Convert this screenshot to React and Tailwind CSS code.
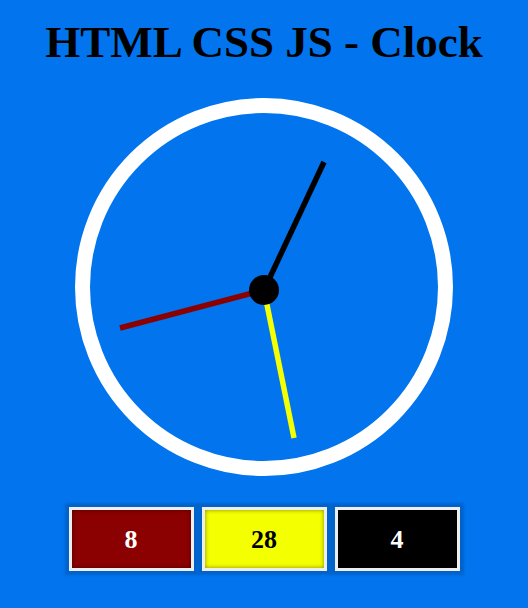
import React from "react";

const hands = [
  { x: 120, y: 328, color: "#8b0000" },
  { x: 294, y: 438, color: "#f4ff00" },
  { x: 324, y: 162, color: "#000000" },
];

function Clock() {
  // svg covers 378x378, origin at face top-left (75, 98)
  const cx = 189;
  const cy = 192;
  return (
    <div className="relative w-[378px] h-[378px] rounded-full border-[15px] border-white">
      <svg
        className="absolute -left-[15px] -top-[15px]"
        width="378"
        height="378"
        viewBox="0 0 378 378"
      >
        {hands.map((h, i) => (
          <line
            key={i}
            x1={cx}
            y1={cy}
            x2={h.x - 75}
            y2={h.y - 98}
            stroke={h.color}
            strokeWidth="5.5"
          />
        ))}
        <circle cx={cx} cy={cy} r="15" fill="#000" />
      </svg>
    </div>
  );
}

function Box({ bg, fg, children }) {
  return (
    <div
      className={`w-[125px] h-[64px] border-[3px] border-[#eeeeee] flex items-center justify-center text-[26px] font-bold shadow-[0_0_2px_4px_rgba(0,0,0,0.14)] ${bg} ${fg}`}
    >
      <div className="w-full h-full flex items-center justify-center shadow-[inset_0_0_4px_rgba(0,0,0,0.45)]">
        {children}
      </div>
    </div>
  );
}

export default function App() {
  return (
    <div
      className="w-[528px] h-[608px] bg-[#0174ee] flex flex-col items-center"
      style={{ fontFamily: '"Liberation Serif", "Times New Roman", serif' }}
    >
      <h1 className="mt-[15px] text-[45px] leading-[54px] font-bold text-black">
        HTML CSS JS - Clock
      </h1>
      <div className="mt-[29px]">
        <Clock />
      </div>
      <div className="mt-[31px] flex gap-[8px]">
        <Box bg="bg-[#8b0000]" fg="text-white">8</Box>
        <Box bg="bg-[#f4ff00]" fg="text-black">28</Box>
        <Box bg="bg-black" fg="text-white">4</Box>
      </div>
    </div>
  );
}
